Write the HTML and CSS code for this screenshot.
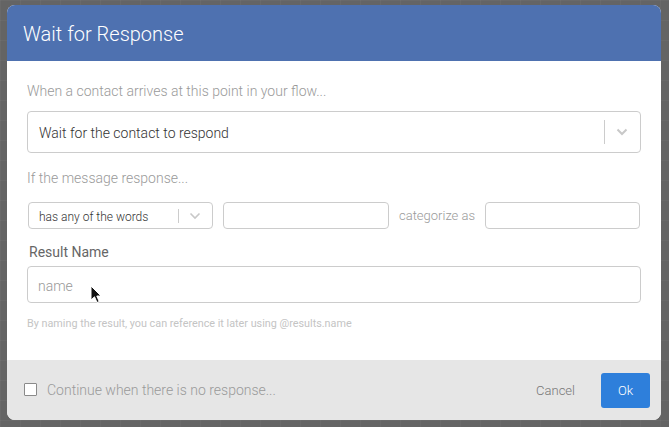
FILE: index.html
```html
<!DOCTYPE html>
<html>
<head>
<meta charset="utf-8">
<link rel="stylesheet" href="styles.css">
</head>
<body>
<div class="canvas">
  <div class="dialog">
    <div class="header">Wait for Response</div>
    <div class="content">
      <div class="hint">When a contact arrives at this point in your flow...</div>
      <div class="select big">
        <span class="value">Wait for the contact to respond</span>
        <span class="sep"></span>
        <svg class="chev" width="12" height="8" viewBox="0 0 12 8"><path d="M1.5 1.5 L6 6 L10.5 1.5" fill="none" stroke="#c8c8c8" stroke-width="2"/></svg>
      </div>
      <div class="hint hint2">If the message response...</div>
      <div class="rule-row">
        <div class="select small">
          <span class="value">has any of the words</span>
          <span class="sep"></span>
          <svg class="chev" width="12" height="8" viewBox="0 0 12 8"><path d="M1.5 1.5 L6 6 L10.5 1.5" fill="none" stroke="#c8c8c8" stroke-width="1.6"/></svg>
        </div>
        <div class="box words"></div>
        <div class="cat">categorize as</div>
        <div class="box catbox"></div>
      </div>
      <div class="label">Result Name</div>
      <div class="name-input">
        <span class="ph">name</span>
        <svg class="cursor" width="12" height="19" viewBox="0 0 12 19"><path d="M1 1 L1 15 L4.5 11.8 L7 17.5 L9.2 16.5 L6.8 11 L11 11 Z" fill="#111" stroke="#fff" stroke-width="1"/></svg>
      </div>
      <div class="help">By naming the result, you can reference it later using @results.name</div>
    </div>
    <div class="footer">
      <label class="check"><span class="cb"></span>Continue when there is no response...</label>
      <span class="cancel">Cancel</span>
      <span class="ok">Ok</span>
    </div>
  </div>
</div>
</body>
</html>
```
FILE: styles.css
```css
html, body { margin: 0; padding: 0; }
body {
  width: 669px; height: 427px; overflow: hidden;
  font-family: Roboto, "Liberation Sans", sans-serif;
  background-color: #646464;
  background-image:
    linear-gradient(to right, rgba(255,255,255,0.035) 1px, transparent 1px),
    linear-gradient(to bottom, rgba(255,255,255,0.035) 1px, transparent 1px);
  background-size: 20px 20px;
}
.canvas { padding: 5px 8px 0 7px; }
.dialog {
  width: 654px; height: 415px;
  background: #fff; border-radius: 8px; overflow: hidden;
  display: flex; flex-direction: column;
}
.header {
  height: 56px; flex: none;
  background: #4e71b0; color: #fff;
  font-size: 20px; font-weight: 300;
  padding-left: 16px; line-height: 59px;
  box-sizing: border-box;
}
.content { flex: 1; padding: 20px 20px 0 20px; }
.hint { font-size: 14px; font-weight: 300; color: #9a9a9a; line-height: 20px; }
.select {
  border: 1px solid #ccc; border-radius: 4px; box-sizing: border-box;
  display: flex; align-items: center; color: #333;
}
.select.big { height: 42px; margin-top: 10px; padding-left: 11px; }
.select .value { flex: 1; font-weight: 300; }
.select.big .value { font-size: 14px; padding-top: 1px; }
.select.big .sep { width: 1px; height: 24px; background: #ccc; }
.select.big .chev { margin: 0 12px 0 11px; }
.hint2 { margin-top: 15px; }
.rule-row { display: flex; align-items: center; margin-top: 14px; height: 27px; }
.select.small { width: 185px; height: 27px; margin-left: 1px; padding-left: 10px; }
.select.small .value { font-size: 12px; padding-top: 2px; }
.select.small .sep { width: 1px; height: 14px; background: #ccc; }
.select.small .chev { margin: 0 11px 0 10px; }
.box { height: 27px; border: 1px solid #ccc; border-radius: 4px; box-sizing: border-box; }
.words { width: 166px; margin-left: 10px; }
.cat { font-size: 13px; font-weight: 300; color: #9a9a9a; margin: 0 10px 0 10px; }
.catbox { width: 155px; }
.label { margin-top: 13px; font-size: 14px; color: #666; line-height: 20px; padding-left: 2px; }
.name-input {
  position: relative;
  margin-top: 4px; height: 37px; box-sizing: border-box;
  border: 1px solid #ccc; border-radius: 4px;
  display: flex; align-items: center; padding-left: 10px;
}
.ph { font-size: 14px; color: #999; font-weight: 300; padding-top: 2px; }
.cursor { position: absolute; left: 62px; top: 18px; }
.help { margin-top: 14px; font-size: 10.8px; color: #c4c4c4; line-height: 14px; }
.footer {
  height: 60px; flex: none; background: #e6e6e6;
  display: flex; align-items: center; padding: 0 11px 0 17px;
}
.check { flex: 1; display: flex; align-items: center; font-size: 14px; font-weight: 300; color: #9a9a9a; }
.cb {
  width: 11px; height: 11px; border: 1px solid #8a8a8a; border-radius: 1px; background: #fff;
  margin-right: 10px; margin-top: -2px;
}
.cancel { font-size: 13px; font-weight: 300; color: #777; margin-right: 26px; margin-top: 1px; }
.ok {
  width: 49px; height: 35px; background: #2e7fdb; color: #fff; border-radius: 3px;
  display: flex; align-items: center; justify-content: center;
  font-size: 13px; font-weight: 300;
}
```
